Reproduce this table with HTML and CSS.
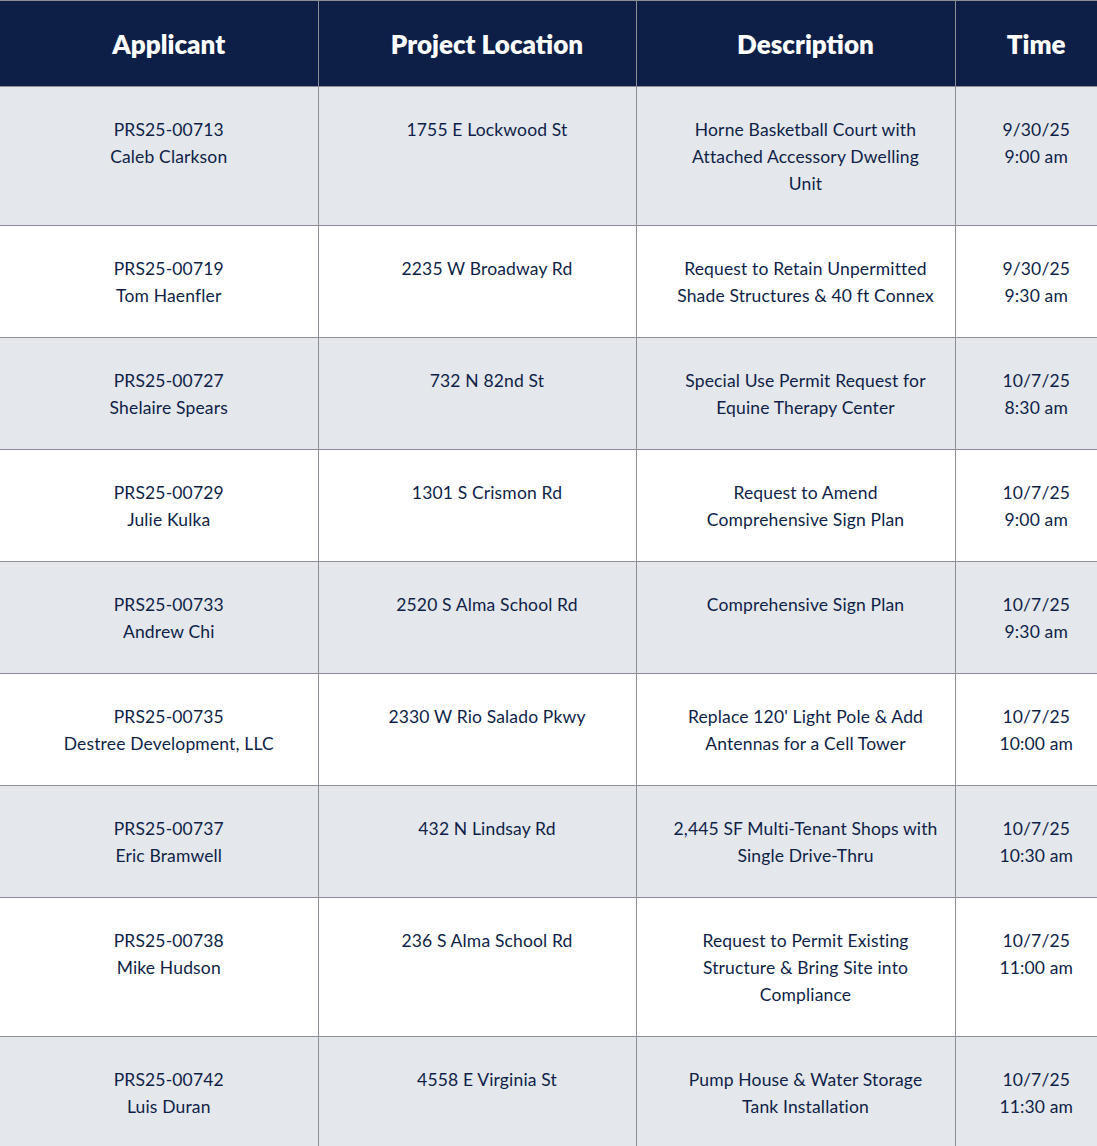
FILE: index.html
```html
<!DOCTYPE html>
<html>
<head>
<meta charset="utf-8">
<link rel="stylesheet" href="styles.css">
</head>
<body>
<table class="schedule">
  <colgroup>
    <col class="c1"><col class="c2"><col class="c3"><col class="c4">
  </colgroup>
  <thead>
    <tr><th>Applicant</th><th>Project Location</th><th>Description</th><th>Time</th></tr>
  </thead>
  <tbody>
    <tr class="alt"><td>PRS25-00713<br>Caleb Clarkson</td><td>1755 E Lockwood St</td><td>Horne Basketball Court with<br>Attached Accessory Dwelling<br>Unit</td><td>9/30/25<br>9:00 am</td></tr>
    <tr><td>PRS25-00719<br>Tom Haenfler</td><td>2235 W Broadway Rd</td><td>Request to Retain Unpermitted<br>Shade Structures &amp; 40 ft Connex</td><td>9/30/25<br>9:30 am</td></tr>
    <tr class="alt"><td>PRS25-00727<br>Shelaire Spears</td><td>732 N 82nd St</td><td>Special Use Permit Request for<br>Equine Therapy Center</td><td>10/7/25<br>8:30 am</td></tr>
    <tr><td>PRS25-00729<br>Julie Kulka</td><td>1301 S Crismon Rd</td><td>Request to Amend<br>Comprehensive Sign Plan</td><td>10/7/25<br>9:00 am</td></tr>
    <tr class="alt"><td>PRS25-00733<br>Andrew Chi</td><td>2520 S Alma School Rd</td><td>Comprehensive Sign Plan</td><td>10/7/25<br>9:30 am</td></tr>
    <tr><td>PRS25-00735<br>Destree Development, LLC</td><td>2330 W Rio Salado Pkwy</td><td>Replace 120' Light Pole &amp; Add<br>Antennas for a Cell Tower</td><td>10/7/25<br>10:00 am</td></tr>
    <tr class="alt"><td>PRS25-00737<br>Eric Bramwell</td><td>432 N Lindsay Rd</td><td>2,445 SF Multi-Tenant Shops with<br>Single Drive-Thru</td><td>10/7/25<br>10:30 am</td></tr>
    <tr><td>PRS25-00738<br>Mike Hudson</td><td>236 S Alma School Rd</td><td>Request to Permit Existing<br>Structure &amp; Bring Site into<br>Compliance</td><td>10/7/25<br>11:00 am</td></tr>
    <tr class="alt"><td>PRS25-00742<br>Luis Duran</td><td>4558 E Virginia St</td><td>Pump House &amp; Water Storage<br>Tank Installation</td><td>10/7/25<br>11:30 am</td></tr>
  </tbody>
</table>
</body>
</html>
```

FILE: styles.css
```css
html, body {
  margin: 0;
  padding: 0;
  background: #ffffff;
}
.schedule {
  width: 1097px;
  border-collapse: collapse;
  table-layout: fixed;
  font-family: "Lato", "Noto Sans", sans-serif;
  color: #0f1f48;
}
.c1 { width: 318px; }
.c2 { width: 318px; }
.c3 { width: 319px; }
.c4 { width: 142px; }
.schedule th,
.schedule td {
  border: 1px solid #8d8e96;
  text-align: center;
  white-space: nowrap;
}
.schedule tr > :first-child { border-left: none; }
.schedule tr > :last-child { border-right: none; }
.schedule th {
  background: #0e1f47;
  color: #ffffff;
  font-size: 26px;
  font-weight: 800;
  line-height: 30px;
  padding: 28px 0 27px 20px;
}
.schedule td {
  font-size: 17.5px;
  letter-spacing: 0.15px;
  line-height: 27px;
  vertical-align: top;
  padding: 29px 0 28px 20px;
}
.schedule tr.alt td {
  background: #e4e7ec;
}
```
